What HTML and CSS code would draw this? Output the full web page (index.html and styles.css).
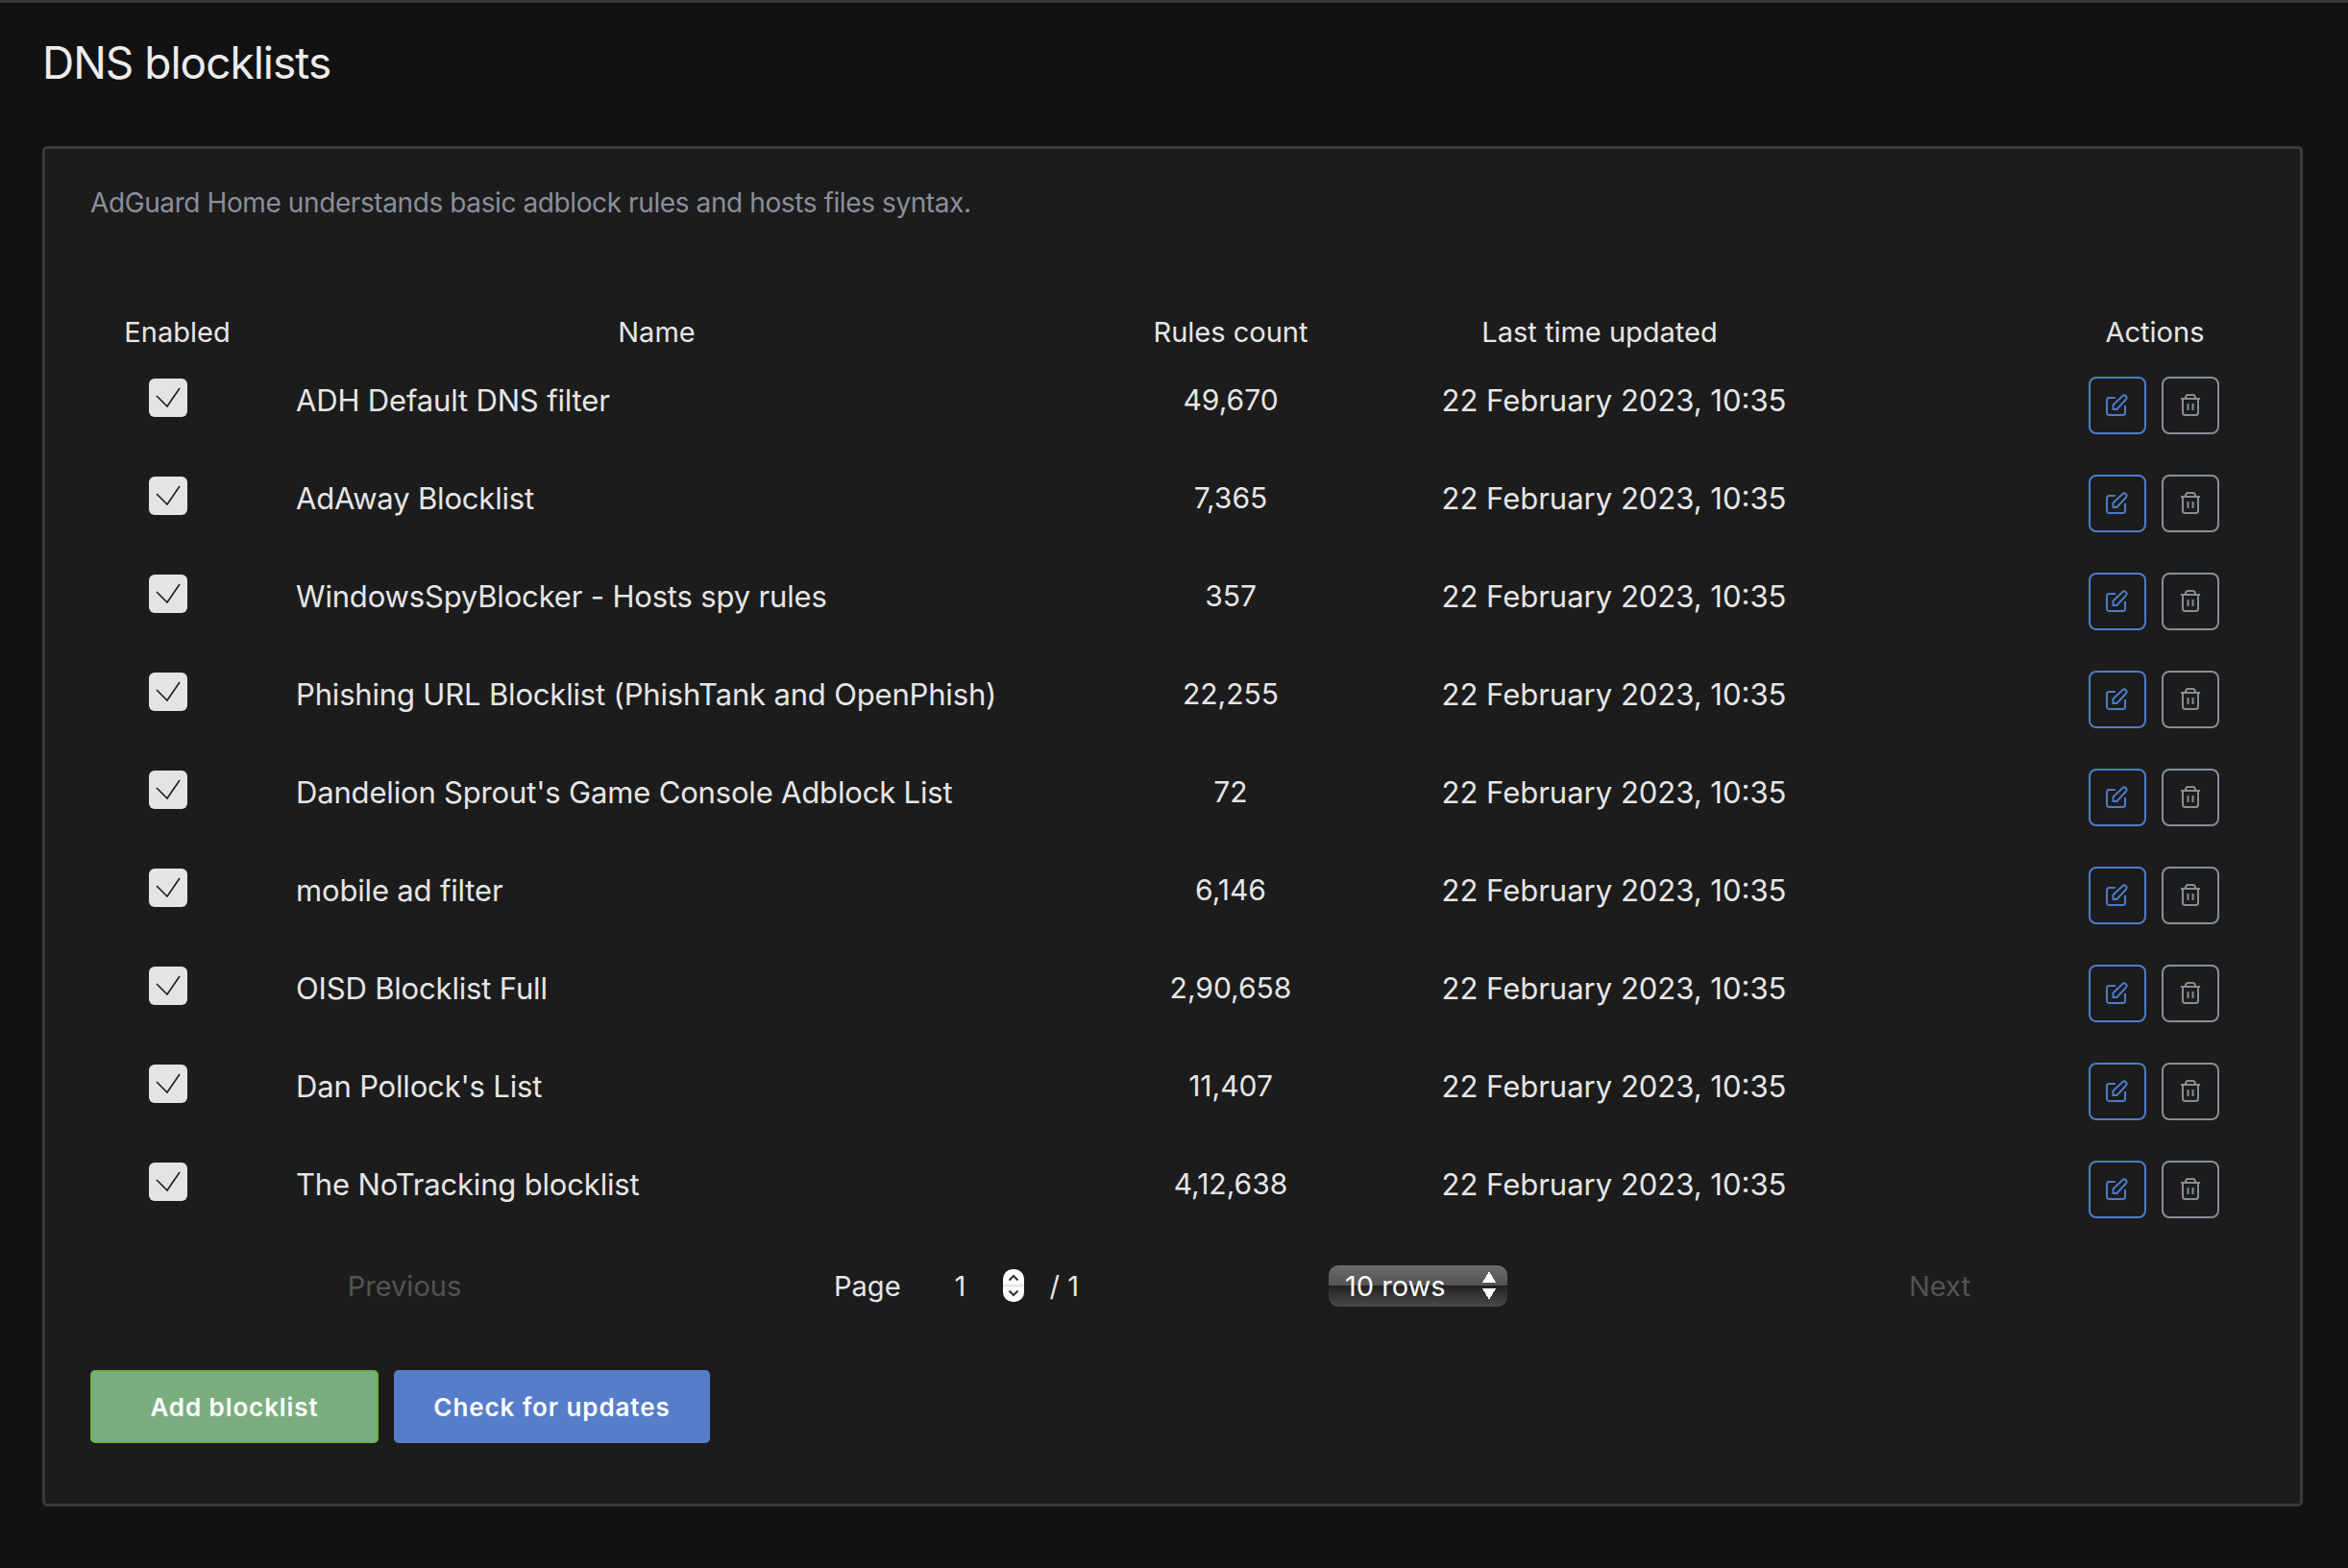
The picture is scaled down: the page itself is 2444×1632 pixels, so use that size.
FILE: index.html
```html
<!DOCTYPE html>
<html lang="en">
<head>
    <meta charset="UTF-8">
    <title>DNS blocklists</title>
    <link rel="stylesheet" href="styles.css">
</head>
<body>

<svg class="sprites" width="0" height="0">
    <symbol id="icon-check" viewBox="0 0 40 40"><path d="M8 18l11 11L32 10"/></symbol>
    <symbol id="icon-edit" viewBox="0 0 24 24"><path d="M10 4H3.500A2.500 2.500 0 0 0 1 6.500V19.500A2.500 2.500 0 0 0 3.500 22H17.500A2.500 2.500 0 0 0 20 19.500V12"/><path d="M7.500 16V11.500L17.500 2a2 2 0 0 1 3 0l.5.500a2 2 0 0 1 0 3L11.500 16z"/></symbol>
    <symbol id="icon-trash" viewBox="0 0 24 24"><path d="M2 5H22M7 5V3.500A2.500 2.500 0 0 1 9.500 1H14.500A2.500 2.500 0 0 1 17 3.500V5M4 5V19.500A2.500 2.500 0 0 0 6.500 22H17.500A2.500 2.500 0 0 0 20 19.500V5M9.500 10V17M14.500 10V17"/></symbol>
</svg>

<h1 class="page-title">DNS blocklists</h1>

<div class="card">
    <p class="card-subtitle">AdGuard Home understands basic adblock rules and hosts files syntax.</p>

    <div class="rt-table">
        <div class="rt-row rt-head">
            <div>Enabled</div>
            <div>Name</div>
            <div>Rules count</div>
            <div>Last time updated</div>
            <div class="col-actions">Actions</div>
        </div>

        <div class="rt-row">
            <div><span class="checkbox"><svg><use href="#icon-check"/></svg></span></div>
            <div class="col-name">ADH Default DNS filter</div>
            <div class="col-count">49,670</div>
            <div class="col-date">22 February 2023, 10:35</div>
            <div class="col-actions buttons"><button class="btn-icon btn-edit"><svg><use href="#icon-edit"/></svg></button><button class="btn-icon btn-delete"><svg><use href="#icon-trash"/></svg></button></div>
        </div>
        <div class="rt-row">
            <div><span class="checkbox"><svg><use href="#icon-check"/></svg></span></div>
            <div class="col-name">AdAway Blocklist</div>
            <div class="col-count">7,365</div>
            <div class="col-date">22 February 2023, 10:35</div>
            <div class="col-actions buttons"><button class="btn-icon btn-edit"><svg><use href="#icon-edit"/></svg></button><button class="btn-icon btn-delete"><svg><use href="#icon-trash"/></svg></button></div>
        </div>
        <div class="rt-row">
            <div><span class="checkbox"><svg><use href="#icon-check"/></svg></span></div>
            <div class="col-name">WindowsSpyBlocker - Hosts spy rules</div>
            <div class="col-count">357</div>
            <div class="col-date">22 February 2023, 10:35</div>
            <div class="col-actions buttons"><button class="btn-icon btn-edit"><svg><use href="#icon-edit"/></svg></button><button class="btn-icon btn-delete"><svg><use href="#icon-trash"/></svg></button></div>
        </div>
        <div class="rt-row">
            <div><span class="checkbox"><svg><use href="#icon-check"/></svg></span></div>
            <div class="col-name">Phishing URL Blocklist (PhishTank and OpenPhish)</div>
            <div class="col-count">22,255</div>
            <div class="col-date">22 February 2023, 10:35</div>
            <div class="col-actions buttons"><button class="btn-icon btn-edit"><svg><use href="#icon-edit"/></svg></button><button class="btn-icon btn-delete"><svg><use href="#icon-trash"/></svg></button></div>
        </div>
        <div class="rt-row">
            <div><span class="checkbox"><svg><use href="#icon-check"/></svg></span></div>
            <div class="col-name">Dandelion Sprout's Game Console Adblock List</div>
            <div class="col-count">72</div>
            <div class="col-date">22 February 2023, 10:35</div>
            <div class="col-actions buttons"><button class="btn-icon btn-edit"><svg><use href="#icon-edit"/></svg></button><button class="btn-icon btn-delete"><svg><use href="#icon-trash"/></svg></button></div>
        </div>
        <div class="rt-row">
            <div><span class="checkbox"><svg><use href="#icon-check"/></svg></span></div>
            <div class="col-name">mobile ad filter</div>
            <div class="col-count">6,146</div>
            <div class="col-date">22 February 2023, 10:35</div>
            <div class="col-actions buttons"><button class="btn-icon btn-edit"><svg><use href="#icon-edit"/></svg></button><button class="btn-icon btn-delete"><svg><use href="#icon-trash"/></svg></button></div>
        </div>
        <div class="rt-row">
            <div><span class="checkbox"><svg><use href="#icon-check"/></svg></span></div>
            <div class="col-name">OISD Blocklist Full</div>
            <div class="col-count">2,90,658</div>
            <div class="col-date">22 February 2023, 10:35</div>
            <div class="col-actions buttons"><button class="btn-icon btn-edit"><svg><use href="#icon-edit"/></svg></button><button class="btn-icon btn-delete"><svg><use href="#icon-trash"/></svg></button></div>
        </div>
        <div class="rt-row">
            <div><span class="checkbox"><svg><use href="#icon-check"/></svg></span></div>
            <div class="col-name">Dan Pollock's List</div>
            <div class="col-count">11,407</div>
            <div class="col-date">22 February 2023, 10:35</div>
            <div class="col-actions buttons"><button class="btn-icon btn-edit"><svg><use href="#icon-edit"/></svg></button><button class="btn-icon btn-delete"><svg><use href="#icon-trash"/></svg></button></div>
        </div>
        <div class="rt-row">
            <div><span class="checkbox"><svg><use href="#icon-check"/></svg></span></div>
            <div class="col-name">The NoTracking blocklist</div>
            <div class="col-count">4,12,638</div>
            <div class="col-date">22 February 2023, 10:35</div>
            <div class="col-actions buttons"><button class="btn-icon btn-edit"><svg><use href="#icon-edit"/></svg></button><button class="btn-icon btn-delete"><svg><use href="#icon-trash"/></svg></button></div>
        </div>

        <div class="pagination">
            <div class="page-link">Previous</div>
            <div class="page-center">
                <span>Page</span>
                <span class="page-input">
                    <span class="page-number">1</span>
                    <span class="stepper">
                        <svg viewBox="0 0 22 34"><path d="M6.500 11.500L11 7l4.500 4.500M6.500 22.500L11 27l4.500-4.500"/></svg>
                    </span>
                </span>
                <span>/ 1</span>
                <span class="rows-select">
                    <span>10 rows</span>
                    <span class="rows-arrows"></span>
                </span>
            </div>
            <div class="page-link">Next</div>
        </div>
    </div>

    <div class="card-actions">
        <button class="btn btn-add">Add blocklist</button>
        <button class="btn btn-update">Check for updates</button>
    </div>
</div>

</body>
</html>
```

FILE: styles.css
```css
* {
    box-sizing: border-box;
}
html, body {
    margin: 0;
}
body {
    height: 1632px;
    overflow: hidden;
    padding: 0 47px 0 44px;
    border-top: 3px solid #3a3a3a;
    background-color: #121212;
    color: #e6e6e6;
    font-family: Inter, "Liberation Sans", sans-serif;
    font-size: 31px;
}
.sprites {
    position: absolute;
}
.page-title {
    margin: 0;
    height: 149px;
    padding-top: 33px;
    font-size: 46px;
    line-height: 58px;
    font-weight: 400;
    letter-spacing: -1px;
    color: #ececec;
}
.card {
    height: 1416px;
    padding: 0 47px;
    background-color: #1c1c1c;
    border: 3px solid #3a3a3a;
    border-radius: 5px;
}
.card-subtitle {
    margin: 0;
    height: 160px;
    padding-top: 36px;
    font-size: 28px;
    line-height: 40px;
    letter-spacing: -0.4px;
    color: #8b8f9b;
}
.rt-table {
    border: 1px solid #181818;
}
.rt-row {
    display: grid;
    grid-template-columns: 179px 819px 376px 392px 281px 202px;
    height: 102px;
    border-bottom: 1px solid #191919;
}
.rt-head {
    height: 57px;
    padding-top: 3px;
    align-items: center;
    text-align: center;
    font-size: 29px;
}
.col-actions {
    grid-column: 6;
}
.col-name {
    padding: 20px 0 0 34px;
    line-height: 48px;
    letter-spacing: -0.17px;
}
.col-count, .col-date {
    padding-top: 19px;
    line-height: 48px;
    text-align: center;
    font-size: 30px;
}
.col-date {
    padding: 20px 0 0 30px;
    font-size: 31px;
}
.checkbox {
    display: block;
    width: 40px;
    height: 40px;
    margin: 21px 0 0 60px;
    background: #e4e4e4;
    border-radius: 6px;
}
.checkbox svg {
    display: block;
    width: 40px;
    height: 40px;
    fill: none;
    stroke: #1c1c1c;
    stroke-width: 1.6;
}
.buttons {
    display: flex;
    gap: 16px;
    padding: 19px 0 0 32px;
}
.btn-icon {
    display: flex;
    align-items: center;
    justify-content: center;
    width: 60px;
    height: 60px;
    padding: 0;
    background: none;
    border: 2.500px solid #4d7cc8;
    border-radius: 8px;
    color: #4d7cc8;
}
.btn-delete {
    border-color: #868e96;
    color: #868e96;
}
.btn-icon svg {
    width: 24px;
    height: 24px;
    fill: none;
    stroke: currentColor;
    stroke-width: 2;
}
.pagination {
    display: grid;
    grid-template-columns: 652px 1fr 654px;
    align-items: center;
    height: 94px;
}
.page-link {
    text-align: center;
    font-size: 29px;
    color: #535353;
}
.page-center {
    display: flex;
    align-items: center;
    justify-content: center;
    gap: 8px;
    padding-right: 2px;
    font-size: 29px;
}
.page-input {
    display: flex;
    align-items: center;
    width: 139px;
    height: 66px;
    padding-left: 47px;
    border: 1px solid #181818;
    border-radius: 4px;
}
.page-number {
    width: 50px;
}
.stepper {
    width: 22px;
    height: 34px;
    background: linear-gradient(#fff 44%, #ddd 50%, #fff 56%);
    border-radius: 10px;
}
.stepper svg {
    display: block;
    width: 22px;
    height: 34px;
    fill: none;
    stroke: #333;
    stroke-width: 2;
}
.rows-select {
    display: flex;
    align-items: center;
    justify-content: space-between;
    width: 186px;
    height: 43px;
    margin-left: 252px;
    padding: 0 12px 0 17px;
    font-size: 29px;
    color: #fff;
    border-radius: 10px;
    background: linear-gradient(#6c6c6c, #535353 49%, #1f1f1f 49%, #2a2a2a 60%, #4a4a4a);
}
.rows-arrows {
    width: 14px;
    height: 30px;
    background:
        linear-gradient(to bottom right, transparent 50%, #fff 50%) 0 0 / 7px 12px no-repeat,
        linear-gradient(to bottom left, transparent 50%, #fff 50%) 7px 0 / 7px 12px no-repeat,
        linear-gradient(to top right, transparent 50%, #fff 50%) 0 18px / 7px 12px no-repeat,
        linear-gradient(to top left, transparent 50%, #fff 50%) 7px 18px / 7px 12px no-repeat;
}
.card-actions {
    display: flex;
    gap: 16px;
    margin-top: 40px;
}
.btn {
    height: 76px;
    padding: 0;
    border: 2px solid;
    border-radius: 5px;
    color: #fff;
    font-family: inherit;
    font-size: 26px;
    font-weight: 600;
    letter-spacing: 0.9px;
}
.btn-add {
    width: 300px;
    background: #7bae7f;
    border-color: #6cb248;
}
.btn-update {
    width: 329px;
    background: #567dc9;
    border-color: #567dc9;
}
```
